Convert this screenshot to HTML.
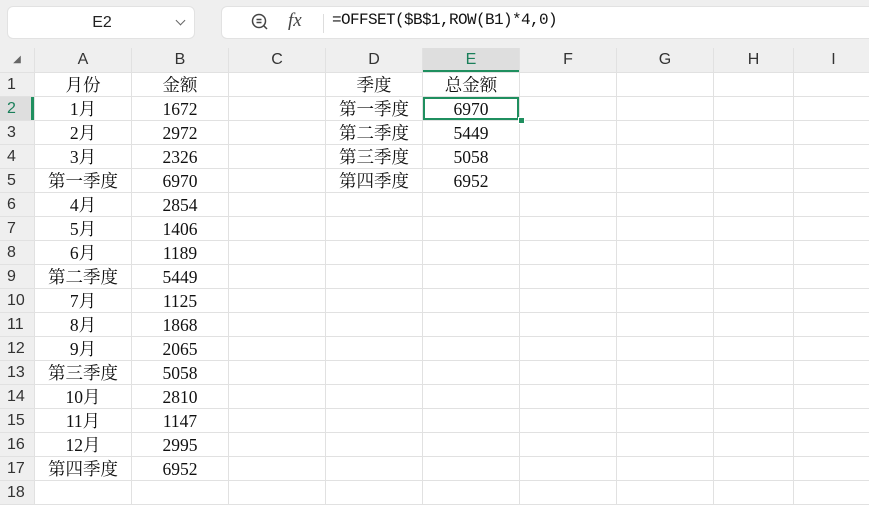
<!DOCTYPE html>
<html><head><meta charset="utf-8"><style>
body{margin:0;width:869px;height:500px;overflow:hidden;background:#efefef;font-family:"Liberation Sans","Noto Sans CJK SC",sans-serif;position:relative}
.nb{position:absolute;left:7px;top:6px;width:188px;height:33px;background:#fff;border-radius:6px;border:1px solid #e2e2e2;box-sizing:border-box}
.nb span{position:absolute;left:0;width:188px;top:7px;text-align:center;font-size:16px;color:#222}
.nb i{position:absolute;right:10px;top:10px;width:6px;height:6px;border-right:1.3px solid #666;border-bottom:1.3px solid #666;transform:rotate(45deg)}
.fb{position:absolute;left:221px;top:6px;width:660px;height:33px;background:#fff;border-radius:6px;border:1px solid #e2e2e2;box-sizing:border-box}
.fx{position:absolute;left:288px;top:10px;font-family:"Liberation Serif",serif;font-style:italic;font-size:19px;color:#444}
.sep{position:absolute;left:323px;top:14px;width:1px;height:19px;background:#ddd}
.ftxt{position:absolute;left:332px;top:11px;font-family:"Liberation Mono","Noto Serif CJK SC",monospace;font-size:16px;color:#111;letter-spacing:-0.6px}
table{position:absolute;left:0;top:48px;border-collapse:separate;border-spacing:0;table-layout:fixed;background:#fff;width:874px}
td{border-right:1px solid #e1e1e1;border-bottom:1px solid #e1e1e1;height:23px;padding:0;text-align:center;font-family:"Liberation Serif","Noto Serif CJK SC",serif;font-size:17.5px;line-height:20px;color:#111;white-space:nowrap;overflow:hidden;box-sizing:border-box}
tr.h td{height:25px;background:#efefef;font-family:"Liberation Sans",sans-serif;font-size:16px;color:#333}
td.r{background:#efefef;font-family:"Liberation Sans",sans-serif;font-size:16px;color:#333;text-align:left;padding-left:7px}
td.ra{background:#dedede;color:#1a7f5a;box-shadow:inset -3px 0 0 #1f8f5f}
td.ea{background:#dedede!important;color:#1a7f5a!important;box-shadow:inset 0 -2px 0 #1f8f5f}
td.sel{box-shadow:inset 0 0 0 2px #1f8f5f}
tr:not(.h) td{height:24px}
</style></head><body>
<div class="nb"><span>E2</span><i></i></div>
<div class="fb"></div>
<svg style="position:absolute;left:250px;top:12px" width="20" height="20" viewBox="0 0 20 20" fill="none" stroke="#444" stroke-width="1.5"><circle cx="9" cy="9" r="6.5"/><path d="M6.5 7.5h5M6.5 10.5h5M14 14l3 3"/></svg>
<div class="fx">fx</div><div class="sep"></div>
<div class="ftxt">=OFFSET($B$1,ROW(B1)*4,0)</div>
<table>
<colgroup><col style="width:35px"><col style="width:97px"><col style="width:97px"><col style="width:97px"><col style="width:97px"><col style="width:97px"><col style="width:97px"><col style="width:97px"><col style="width:80px"><col style="width:80px"></colgroup>
<tr class="h"><td style="font-size:10px;color:#666">◢</td><td>A</td><td>B</td><td>C</td><td>D</td><td class="ea">E</td><td>F</td><td>G</td><td>H</td><td>I</td></tr>
<tr><td class="r">1</td><td>月份</td><td>金额</td><td></td><td>季度</td><td>总金额</td><td></td><td></td><td></td><td></td></tr>
<tr><td class="r ra">2</td><td>1月</td><td>1672</td><td></td><td>第一季度</td><td class="sel">6970</td><td></td><td></td><td></td><td></td></tr>
<tr><td class="r">3</td><td>2月</td><td>2972</td><td></td><td>第二季度</td><td>5449</td><td></td><td></td><td></td><td></td></tr>
<tr><td class="r">4</td><td>3月</td><td>2326</td><td></td><td>第三季度</td><td>5058</td><td></td><td></td><td></td><td></td></tr>
<tr><td class="r">5</td><td>第一季度</td><td>6970</td><td></td><td>第四季度</td><td>6952</td><td></td><td></td><td></td><td></td></tr>
<tr><td class="r">6</td><td>4月</td><td>2854</td><td></td><td></td><td></td><td></td><td></td><td></td><td></td></tr>
<tr><td class="r">7</td><td>5月</td><td>1406</td><td></td><td></td><td></td><td></td><td></td><td></td><td></td></tr>
<tr><td class="r">8</td><td>6月</td><td>1189</td><td></td><td></td><td></td><td></td><td></td><td></td><td></td></tr>
<tr><td class="r">9</td><td>第二季度</td><td>5449</td><td></td><td></td><td></td><td></td><td></td><td></td><td></td></tr>
<tr><td class="r">10</td><td>7月</td><td>1125</td><td></td><td></td><td></td><td></td><td></td><td></td><td></td></tr>
<tr><td class="r">11</td><td>8月</td><td>1868</td><td></td><td></td><td></td><td></td><td></td><td></td><td></td></tr>
<tr><td class="r">12</td><td>9月</td><td>2065</td><td></td><td></td><td></td><td></td><td></td><td></td><td></td></tr>
<tr><td class="r">13</td><td>第三季度</td><td>5058</td><td></td><td></td><td></td><td></td><td></td><td></td><td></td></tr>
<tr><td class="r">14</td><td>10月</td><td>2810</td><td></td><td></td><td></td><td></td><td></td><td></td><td></td></tr>
<tr><td class="r">15</td><td>11月</td><td>1147</td><td></td><td></td><td></td><td></td><td></td><td></td><td></td></tr>
<tr><td class="r">16</td><td>12月</td><td>2995</td><td></td><td></td><td></td><td></td><td></td><td></td><td></td></tr>
<tr><td class="r">17</td><td>第四季度</td><td>6952</td><td></td><td></td><td></td><td></td><td></td><td></td><td></td></tr>
<tr><td class="r">18</td><td></td><td></td><td></td><td></td><td></td><td></td><td></td><td></td><td></td></tr>
</table>
<div style="position:absolute;left:518px;top:117px;width:5px;height:5px;background:#1f8f5f;border:1px solid #fff"></div>
</body></html>
